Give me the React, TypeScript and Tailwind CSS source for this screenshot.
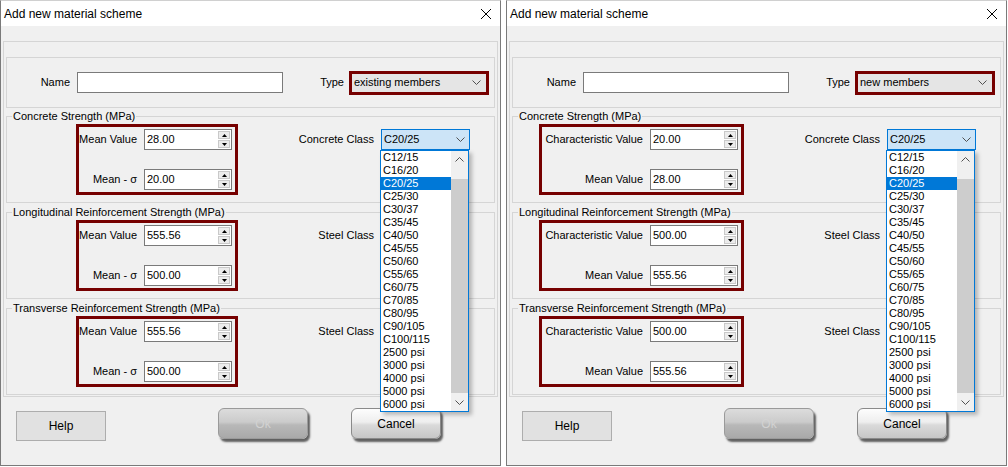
import React from 'react';

const classes = [
  'C12/15', 'C16/20', 'C20/25', 'C25/30', 'C30/37', 'C35/45', 'C40/50', 'C45/55', 'C50/60', 'C55/65',
  'C60/75', 'C70/85', 'C80/95', 'C90/105', 'C100/115', '2500 psi', '3000 psi', '4000 psi', '5000 psi', '6000 psi',
];

type Row = [string, string];

function Chevron({ up }: { up?: boolean }) {
  return (
    <svg width="9" height="5" viewBox="0 0 9 5">
      <path
        d={up ? 'M0.5 4.5 L4.5 0.5 L8.5 4.5' : 'M0.5 0.5 L4.5 4.5 L8.5 0.5'}
        fill="none"
        stroke="#505050"
        strokeWidth="1"
      />
    </svg>
  );
}

function SpinInput({ value }: { value: string }) {
  return (
    <div className="flex h-[21px] w-[88px] border border-[#7a7a7a] bg-white">
      <span className="flex-1 pl-[2px] leading-[19px]">{value}</span>
      <div className="my-[1px] mr-[1px] flex w-[12px] flex-col gap-[1px]">
        <div className="flex flex-1 items-center justify-center border border-[#c9c9c9] bg-[#ececec]">
          <svg width="5" height="3" viewBox="0 0 5 3">
            <path d="M2.5 0 L5 3 L0 3 Z" fill="#000" />
          </svg>
        </div>
        <div className="flex flex-1 items-center justify-center border border-[#c9c9c9] bg-[#ececec]">
          <svg width="5" height="3" viewBox="0 0 5 3">
            <path d="M0 0 L5 0 L2.5 3 Z" fill="#000" />
          </svg>
        </div>
      </div>
    </div>
  );
}

function Group({ title, rows, boxClass, classLabel, focused }: {
  title: string;
  rows: Row[];
  boxClass: string;
  classLabel: string;
  focused?: boolean;
}) {
  return (
    <fieldset className="mt-[3px] border border-[#d5d5d5] pb-[7px] first-of-type:mt-[2px]">
      <legend className="ml-[5px] px-[1px] leading-[13px]">{title}</legend>
      <div className="flex items-start pt-[1px]">
        <div className={boxClass}>
          {rows.map(([label, value]) => (
            <div key={label} className="flex items-center justify-end gap-[7px]">
              <span className="whitespace-nowrap">{label}</span>
              <SpinInput value={value} />
            </div>
          ))}
        </div>
        <div className="flex flex-1 items-center justify-end gap-[7px] pr-[24px] pt-[5px]">
          <span className="whitespace-nowrap">{classLabel}</span>
          {focused ? (
            <div className="flex h-[21px] w-[89px] items-center justify-between border border-[#0078d7] bg-[#cce4f7] pl-[2px] pr-[4px]">
              <span>C20/25</span>
              <Chevron />
            </div>
          ) : (
            // covered by the open list
            <div className="invisible h-[21px] w-[89px]" />
          )}
        </div>
      </div>
    </fieldset>
  );
}

function Dropdown() {
  return (
    <div className="absolute left-[379px] top-[149px] z-10 flex h-[262px] w-[89px] border border-[#0078d7] bg-white shadow-[3px_3px_4px_rgba(0,0,0,0.25)]">
      <div className="flex w-[70px] flex-col">
        {classes.map((c) => (
          <div
            key={c}
            className={
              c === 'C20/25'
                ? 'h-[13px] bg-[#0078d7] pl-[2px] leading-[13px] text-white'
                : 'h-[13px] pl-[2px] leading-[13px]'
            }
          >
            {c}
          </div>
        ))}
      </div>
      <div className="flex w-[17px] flex-col bg-[#f0f0f0]">
        <div className="flex h-[17px] items-center justify-center">
          <Chevron up />
        </div>
        <div className="mt-[11px] h-[214px] bg-[#cdcdcd]" />
        <div className="mt-[1px] flex h-[17px] items-center justify-center">
          <Chevron />
        </div>
      </div>
    </div>
  );
}

function Dialog({ type, groups, boxClass }: {
  type: string;
  groups: { title: string; rows: Row[]; classLabel: string; focused?: boolean }[];
  boxClass: string;
}) {
  return (
    <div className="relative flex h-[466px] w-[501px] shrink-0 flex-col border border-[#7a7a7a] border-t-[#d0d0d0] bg-[#f0f0f0]">
      <div className="flex h-[25px] items-center justify-between bg-white pl-[3px] pr-[9px] text-[12px]">
        <span>Add new material scheme</span>
        <svg width="10" height="10" viewBox="0 0 10 10">
          <path d="M0 0 L10 10 M10 0 L0 10" stroke="#000" strokeWidth="1" />
        </svg>
      </div>

      <div className="px-[2px]">
        <div className="mt-[15px] border border-[#d5d5d5] px-[2px] pb-[1px] pt-[15px]">
          <div className="flex h-[51px] items-center border border-[#d5d5d5]">
            <span className="w-[63px] text-right">Name</span>
            <div className="ml-[7px] h-[21px] w-[206px] border border-[#7a7a7a] bg-white" />
            <span className="ml-auto">Type</span>
            <div className="ml-[5px] mr-[5px] h-[24px] w-[140px] border-[3px] border-[#760000]">
              <div className="flex h-full items-center justify-between bg-[#e5e5e5] pl-[2px] pr-[5px]">
                <span>{type}</span>
                <Chevron />
              </div>
            </div>
          </div>
          {groups.map((g) => (
            <Group key={g.title} {...g} boxClass={boxClass} />
          ))}
        </div>

        <div className="flex items-start pl-[13px] pt-[11px]">
          <button className="mt-[3px] h-[30px] w-[90px] border border-[#adadad] bg-[#e1e1e1] text-[12px]">
            Help
          </button>
          <button className="ml-[112px] h-[31px] w-[90px] rounded-[6px] border border-[#9a9a9a] bg-[linear-gradient(to_bottom,#dcdcdc_0%,#cbcbcb_45%,#b8b8b8_55%,#a9a9a9_100%)] text-[12px] text-[#d2d2d2] shadow-[2px_3px_2px_rgba(0,0,0,0.6)]">
            Ok
          </button>
          <button className="ml-[43px] h-[31px] w-[90px] rounded-[6px] border border-[#8a8a8a] bg-[linear-gradient(to_bottom,#fdfdfd_0%,#eeeeee_45%,#dadada_55%,#c6c6c6_100%)] text-[12px] shadow-[2px_3px_2px_rgba(0,0,0,0.6)]">
            Cancel
          </button>
        </div>
      </div>

      <Dropdown />
    </div>
  );
}

export default function App() {
  return (
    <div className="flex h-[467px] w-[1008px] gap-[5px] overflow-hidden bg-white font-['Liberation_Sans',Arial,sans-serif] text-[11px] text-black">
      <Dialog
        type="existing members"
        boxClass="ml-[69px] flex w-[162px] flex-col gap-[19px] border-[3px] border-[#760000] py-[2px] pr-[3px]"
        groups={[
          { title: 'Concrete Strength (MPa)', rows: [['Mean Value', '28.00'], ['Mean - σ', '20.00']], classLabel: 'Concrete Class', focused: true },
          { title: 'Longitudinal Reinforcement Strength (MPa)', rows: [['Mean Value', '555.56'], ['Mean - σ', '500.00']], classLabel: 'Steel Class' },
          { title: 'Transverse Reinforcement Strength (MPa)', rows: [['Mean Value', '555.56'], ['Mean - σ', '500.00']], classLabel: 'Steel Class' },
        ]}
      />
      <Dialog
        type="new members"
        boxClass="ml-[26px] flex w-[205px] flex-col gap-[19px] border-[3px] border-[#760000] py-[2px] pr-[3px]"
        groups={[
          { title: 'Concrete Strength (MPa)', rows: [['Characteristic Value', '20.00'], ['Mean Value', '28.00']], classLabel: 'Concrete Class', focused: true },
          { title: 'Longitudinal Reinforcement Strength (MPa)', rows: [['Characteristic Value', '500.00'], ['Mean Value', '555.56']], classLabel: 'Steel Class' },
          { title: 'Transverse Reinforcement Strength (MPa)', rows: [['Characteristic Value', '500.00'], ['Mean Value', '555.56']], classLabel: 'Steel Class' },
        ]}
      />
    </div>
  );
}
